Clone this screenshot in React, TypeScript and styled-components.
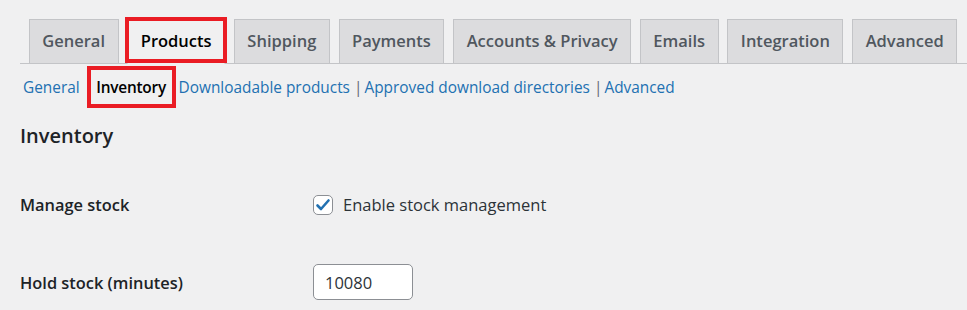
import React from "react";
import styled, { createGlobalStyle } from "styled-components";

const Global = createGlobalStyle`
  html, body { margin: 0; padding: 0; background: #f0f0f1; }
  body { font-family: "Open Sans", "Noto Sans", Arial, sans-serif; color: #3c434a; }
  * { box-sizing: border-box; }
`;

const Page = styled.div`
  width: 967px;
  height: 310px;
  overflow: hidden;
  padding: 19px 0 0 20px;
`;

const TabBar = styled.nav`
  display: flex;
  align-items: flex-end;
  border-bottom: 1px solid #c3c4c7;
  height: 45px;
`;

const Tab = styled.a<{ $active?: boolean; $marked?: boolean }>`
  position: relative;
  display: block;
  height: 45px;
  margin-left: 8.75px;
  margin-bottom: -1px;
  padding: 0 12.5px;
  border: 1px solid #c3c4c7;
  border-bottom-color: ${(p) => (p.$active ? "#f0f0f1" : "#c3c4c7")};
  background: ${(p) => (p.$active ? "#f0f0f1" : "#dcdcde")};
  color: ${(p) => (p.$active ? "#000" : "#50575e")};
  font-size: 16.5px;
  font-weight: 600;
  line-height: 42px;
  white-space: nowrap;
  text-decoration: none;
  &::after {
    content: "";
    display: ${(p) => (p.$marked ? "block" : "none")};
    position: absolute;
    left: -3px;
    right: -3px;
    top: -3px;
    bottom: 0;
    border: 4.5px solid #ea1c24;
  }
`;

const SubNav = styled.div`
  display: flex;
  align-items: center;
  height: 46px;
  font-size: 15.4px;
  white-space: nowrap;
`;

const SubLink = styled.a<{ $ml?: number }>`
  color: #2271b1;
  text-decoration: none;
  margin-left: ${(p) => p.$ml ?? 0}px;
`;

const Current = styled.span`
  display: flex;
  align-items: center;
  height: 42px;
  margin-left: 7px;
  padding: 0 5.5px;
  border: 4.5px solid #ea1c24;
  color: #000;
  font-weight: 600;
  letter-spacing: -0.2px;
`;

const Sep = styled.span`
  color: #646970;
  margin: 0 2px 0 4px;
`;

const Heading = styled.h2`
  margin: 12px 0 0;
  font-size: 20px;
  font-weight: 600;
  color: #1d2327;
  line-height: 28px;
`;

const Row = styled.div<{ $mt: number }>`
  display: flex;
  align-items: center;
  margin-top: ${(p) => p.$mt}px;
`;

const Label = styled.label`
  width: 293px;
  font-size: 16.4px;
  font-weight: 600;
  color: #1d2327;
`;

const CheckLabel = styled.label`
  display: flex;
  align-items: center;
  gap: 10px;
  font-size: 16.5px;
  color: #2c3338;
`;

const Box = styled.span`
  display: flex;
  align-items: center;
  justify-content: center;
  width: 20px;
  height: 20px;
  border: 1px solid #8c8f94;
  border-radius: 5px;
  background: #fff;
`;

const Input = styled.input`
  width: 100px;
  height: 36px;
  padding: 0 11px;
  border: 1px solid #8c8f94;
  border-radius: 5px;
  background: #fff;
  font-family: inherit;
  font-size: 16.5px;
  color: #2c3338;
`;

const tabs = [
  "General",
  "Products",
  "Shipping",
  "Payments",
  "Accounts & Privacy",
  "Emails",
  "Integration",
  "Advanced",
];

export default function App() {
  return (
    <Page>
      <Global />
      <TabBar>
        {tabs.map((t) => (
          <Tab key={t} $active={t === "Products"} $marked={t === "Products"}>
            {t}
          </Tab>
        ))}
      </TabBar>
      <SubNav>
        <SubLink $ml={3}>General</SubLink>
        <Current>Inventory</Current>
        <SubLink $ml={3}>Downloadable products</SubLink>
        <Sep>|</Sep>
        <SubLink>Approved download directories</SubLink>
        <Sep>|</Sep>
        <SubLink>Advanced</SubLink>
      </SubNav>
      <Heading>Inventory</Heading>
      <Row $mt={43}>
        <Label>Manage stock</Label>
        <CheckLabel>
          <Box>
            <svg width="16" height="16" viewBox="0 0 16 16">
              <path
                d="M2.5 8.5 L6 12 L13.5 3.5"
                fill="none"
                stroke="#2271b1"
                strokeWidth="2.6"
                strokeLinecap="round"
                strokeLinejoin="round"
              />
            </svg>
          </Box>
          Enable stock management
        </CheckLabel>
      </Row>
      <Row $mt={48}>
        <Label>Hold stock (minutes)</Label>
        <Input defaultValue="10080" />
      </Row>
    </Page>
  );
}
